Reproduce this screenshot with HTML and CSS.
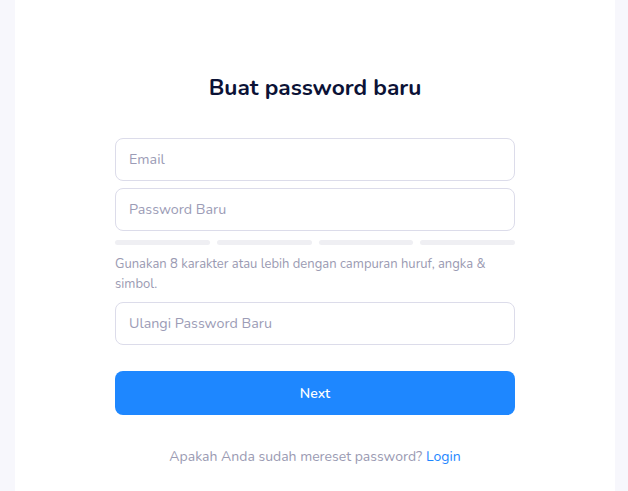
FILE: index.html
```html
<!DOCTYPE html>
<html lang="id">
<head>
<meta charset="utf-8">
<title>Buat password baru</title>
<link rel="stylesheet" href="styles.css">
</head>
<body>
<main class="panel">
  <form class="form">
    <h1 class="title">Buat password baru</h1>
    <input class="field" type="email" placeholder="Email">
    <input class="field" type="password" placeholder="Password Baru">
    <div class="strength">
      <span class="bar"></span>
      <span class="bar"></span>
      <span class="bar"></span>
      <span class="bar"></span>
    </div>
    <p class="hint">Gunakan 8 karakter atau lebih dengan campuran huruf, angka &amp; simbol.</p>
    <input class="field" type="password" placeholder="Ulangi Password Baru">
    <button class="next" type="button">Next</button>
    <p class="footer">Apakah Anda sudah mereset password? <a class="link" href="#">Login</a></p>
  </form>
</main>
</body>
</html>
```
FILE: styles.css
```css
* { box-sizing: border-box; }
html, body { margin: 0; padding: 0; }
body {
  background: #f7f7fc;
  font-family: "Nunito", "Open Sans", "Noto Sans", sans-serif;
  height: 491px;
}
.panel {
  width: 600px;
  height: 100%;
  margin-left: 15px;
  background: #ffffff;
  display: flex;
  justify-content: center;
}
.form {
  width: 400px;
  padding-top: 74px;
  display: flex;
  flex-direction: column;
}
.title {
  margin: 0 0 36px;
  font-size: 22.7px;
  line-height: 28px;
  font-weight: 700;
  color: #0b1236;
  text-align: center;
}
.field {
  height: 43px;
  width: 100%;
  border: 1px solid #dcdcea;
  border-radius: 8px;
  padding: 0 13px;
  font-family: inherit;
  font-size: 14.3px;
  color: #2b2b45;
  background: #fff;
  outline: none;
  margin-bottom: 7px;
}
.field::placeholder { color: #9c9cb6; }
.strength {
  display: flex;
  gap: 7px;
  margin-top: 2px;
}
.bar {
  flex: 1;
  height: 5px;
  border-radius: 3px;
  background: #efeff3;
}
.hint {
  margin: 9px 0 8px;
  font-size: 13px;
  line-height: 20px;
  color: #9a9ab2;
}
.next {
  margin-top: 19px;
  height: 44px;
  border: none;
  border-radius: 8px;
  background: #1e87ff;
  color: #fff;
  font-family: inherit;
  font-size: 14px;
  font-weight: 600;
}
.footer {
  margin: 32px 0 0;
  text-align: center;
  font-size: 14px;
  line-height: 20px;
  color: #9a9ab2;
}
.link { color: #1e87ff; text-decoration: none; }
```
